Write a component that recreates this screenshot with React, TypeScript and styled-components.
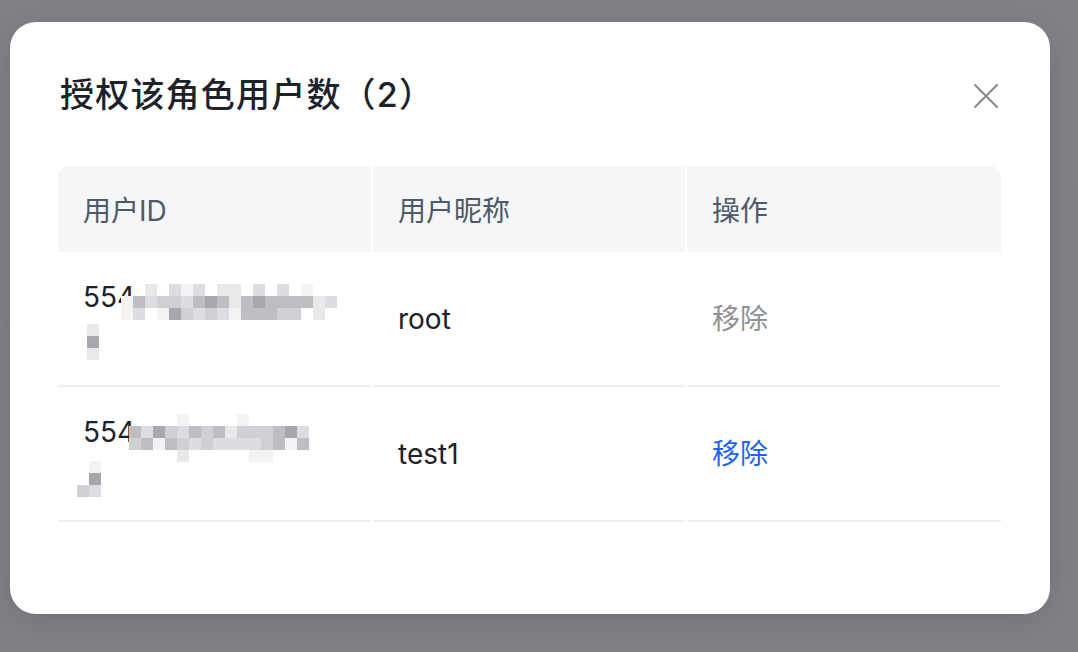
import React from "react";
import styled, { createGlobalStyle } from "styled-components";

const Global = createGlobalStyle`
  html, body { margin: 0; padding: 0; }
  body {
    background: #808185;
    font-family: Inter, "Noto Sans CJK SC", sans-serif;
    width: 1078px;
    height: 652px;
    overflow: hidden;
  }
`;

const Backdrop = styled.div`
  width: 1078px;
  height: 652px;
  box-sizing: border-box;
  padding: 22px 0 0 10px;
  background: linear-gradient(180deg, #818286 0%, #808185 100%);
`;

const Modal = styled.div`
  width: 1040px;
  height: 592px;
  box-sizing: border-box;
  background: #ffffff;
  border-radius: 26px;
  box-shadow: 0 6px 30px rgba(0, 0, 0, 0.12);
  padding: 0 48px;
  display: flex;
  flex-direction: column;
`;

const Header = styled.div`
  height: 144px;
  display: flex;
  align-items: center;
  justify-content: space-between;
`;

const Title = styled.h2`
  margin: 0 0 4px 2px;
  font-family: Inter, "Noto Sans CJK SC", sans-serif;
  font-size: 34px;
  font-weight: 500;
  color: #1d2129;
  letter-spacing: 1.2px;
`;

const CloseButton = styled.button`
  border: none;
  background: transparent;
  padding: 0;
  width: 24px;
  height: 24px;
  margin-right: 4px;
  margin-top: 4px;
  display: flex;
  align-items: center;
  justify-content: center;
  cursor: pointer;
`;

const Table = styled.div`
  width: 943px;
  display: grid;
  grid-template-columns: 313px 312px 314px;
  column-gap: 2px;
`;

const HeadCell = styled.div<{ $first?: boolean; $last?: boolean }>`
  height: 86px;
  background: #f5f6f8;
  display: flex;
  align-items: center;
  padding-left: 25px;
  font-size: 28px;
  color: #4e5969;
  border-top-left-radius: ${(p) => (p.$first ? "10px" : "0")};
  border-top-right-radius: ${(p) => (p.$last ? "10px" : "0")};
`;

const Cell = styled.div`
  height: 133px;
  border-bottom: 2px solid #efeff1;
  display: flex;
  align-items: center;
  padding-left: 25px;
  font-size: 28px;
  color: #1d2129;
  line-height: 44px;
`;

const IdBlock = styled.div`
  display: flex;
  flex-direction: column;
`;

const IdLine = styled.div`
  display: flex;
  align-items: center;
  height: 44px;
`;

const Action = styled.span<{ $disabled?: boolean }>`
  color: ${(p) => (p.$disabled ? "#8e9196" : "#1f63f3")};
  cursor: ${(p) => (p.$disabled ? "not-allowed" : "pointer")};
`;

type MosaicProps = { cells: string[][]; size?: number; offsetY?: number; offsetX?: number };

const Mosaic: React.FC<MosaicProps> = ({ cells, size = 12, offsetY = 0, offsetX = 0 }) => {
  const w = Math.max(...cells.map((r) => r.length)) * size;
  const h = cells.length * size;
  return (
    <svg width={w} height={h} style={{ marginTop: offsetY, marginLeft: offsetX }} viewBox={`0 0 ${w} ${h}`}>
      {cells.map((row, ri) =>
        row.map((c, ci) =>
          c === "" ? null : (
            <rect key={`${ri}-${ci}`} x={ci * size} y={ri * size} width={size} height={size} fill={c} />
          )
        )
      )}
    </svg>
  );
};

const A = "#a7a8ad";
const B = "#bdbec2";
const C = "#cfd0d3";
const D = "#dcdde0";
const E = "#e9e9eb";
const F = "#f3f3f4";

const mosaic1: string[][] = [
  ["", "", E, "", D, F, D, "", E, E, "", D, "", D, "", F],
  [F, B, D, C, C, D, B, A, B, E, B, A, B, B, B, B, E, D],
  [F, D, "", F, A, C, D, C, D, F, B, B, B, C, C, "", E, ""],
];
const mosaic1b: string[][] = [[E], [A], [E]];
const mosaic2: string[][] = [
  ["", "", "", "", F, "", "", "", "", F, "", "", "", "", ""],
  [B, D, A, C, D, B, C, B, E, C, C, C, B, A, D],
  [C, B, F, B, C, D, C, D, D, D, D, C, B, F, B],
  ["", "", "", "", E, "", "", "", "", "", F, F, "", "", ""],
];
const mosaic2b: string[][] = [
  ["", F],
  ["", A],
  [C, D],
];

const CloseIcon = () => (
  <svg width="24" height="24" viewBox="0 0 24 24" fill="none">
    <path d="M1 1 L23 23 M23 1 L1 23" stroke="#86888d" strokeWidth="2" strokeLinecap="round" />
  </svg>
);

export default function App() {
  return (
    <>
      <Global />
      <Backdrop>
        <Modal>
          <Header>
            <Title>授权该角色用户数（2）</Title>
            <CloseButton aria-label="关闭">
              <CloseIcon />
            </CloseButton>
          </Header>
          <Table>
            <HeadCell $first>用户ID</HeadCell>
            <HeadCell>用户昵称</HeadCell>
            <HeadCell $last>操作</HeadCell>

            <Cell>
              <IdBlock>
                <IdLine>
                  554
                  <Mosaic cells={mosaic1} offsetY={10} offsetX={-14} />
                </IdLine>
                <IdLine>
                  <Mosaic cells={mosaic1b} offsetY={2} offsetX={4} />
                </IdLine>
              </IdBlock>
            </Cell>
            <Cell>root</Cell>
            <Cell>
              <Action $disabled>移除</Action>
            </Cell>

            <Cell>
              <IdBlock>
                <IdLine>
                  554
                  <Mosaic cells={mosaic2} offsetY={12} offsetX={-6} />
                </IdLine>
                <IdLine>
                  <Mosaic cells={mosaic2b} offsetY={6} offsetX={-6} />
                </IdLine>
              </IdBlock>
            </Cell>
            <Cell>test1</Cell>
            <Cell>
              <Action>移除</Action>
            </Cell>
          </Table>
        </Modal>
      </Backdrop>
    </>
  );
}
